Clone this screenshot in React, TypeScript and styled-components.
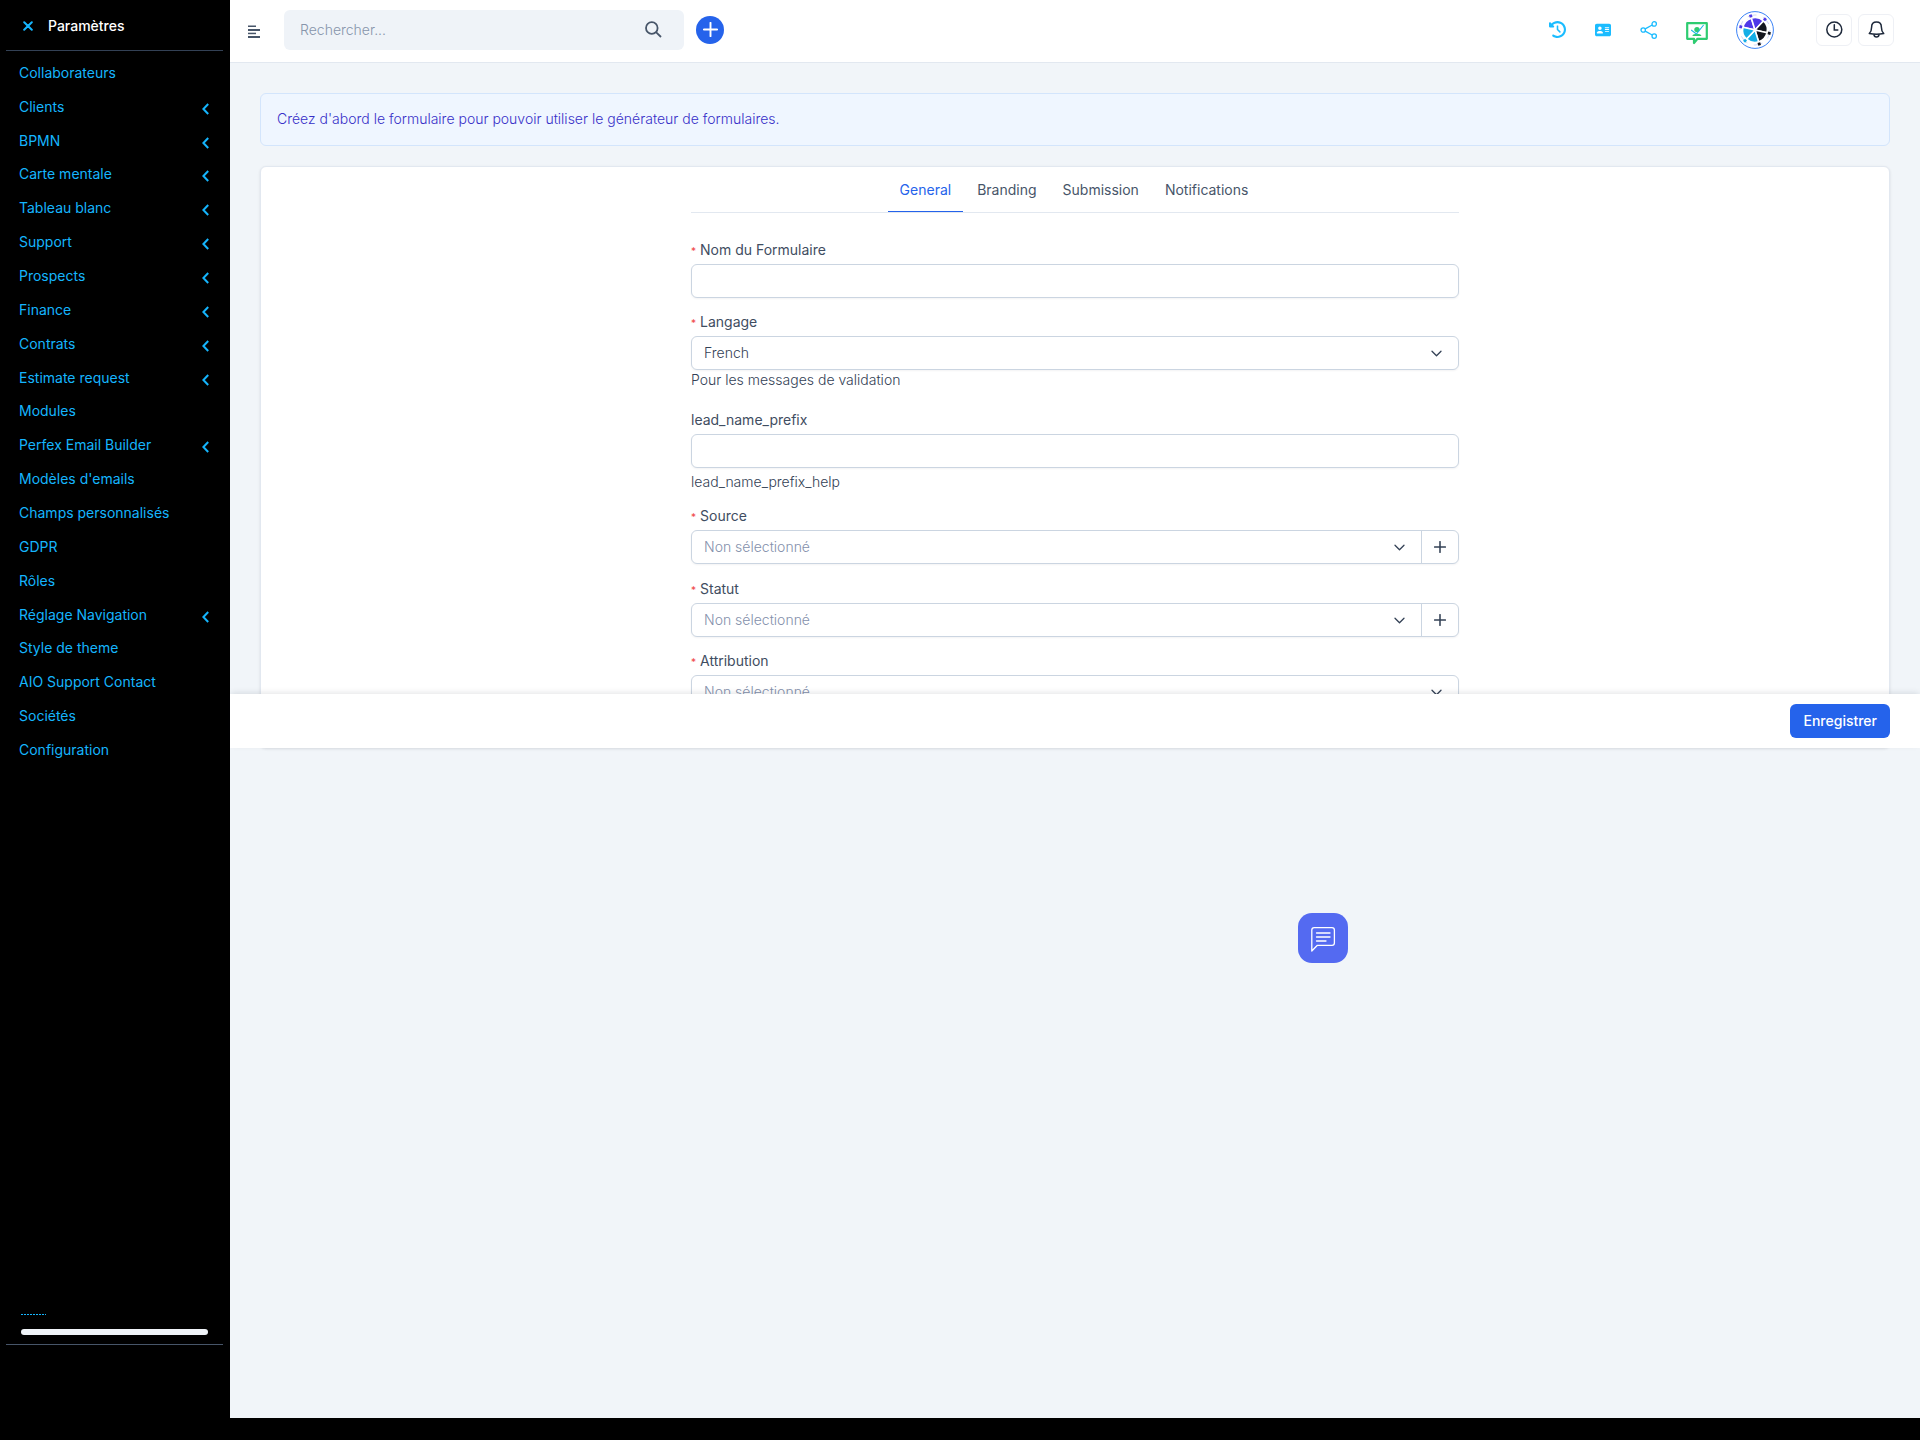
import React from 'react';
import styled, { createGlobalStyle } from 'styled-components';
import { FaClockRotateLeft, FaAddressCard } from 'react-icons/fa6';

const GlobalStyle = createGlobalStyle`
  *, *::before, *::after { box-sizing: border-box; }
  body {
    margin: 0;
    background: #000;
    color: #475569;
    font-family: Inter, "Liberation Sans", sans-serif;
    font-size: 14px;
    line-height: 20px;
  }
  button, input, select { font: inherit; color: inherit; margin: 0; }
  ul { list-style: none; margin: 0; padding: 0; }
`;

const Shell = styled.div`
  display: grid;
  grid-template-columns: 230px minmax(0, 1fr);
  grid-template-rows: minmax(0, 1fr) 22px;
  min-height: 100vh;
  background: #000;
`;

/* ---------- sidebar ---------- */

const Sidebar = styled.aside`
  grid-row: 1 / 3;
  display: flex;
  flex-direction: column;
  padding: 0 7px 0 6px;
  background: #000;
  color: #15b5fd;
`;

const SidebarHead = styled.div`
  display: flex;
  align-items: center;
  gap: 15px;
  height: 51px;
  padding: 2px 0 0 17px;
  border-bottom: 1px solid #334155;
`;

const CloseButton = styled.button`
  display: flex;
  padding: 0;
  border: 0;
  background: none;
  color: inherit;
  cursor: pointer;
`;

const SidebarTitle = styled.span`
  color: #fff;
  font-weight: 500;
`;

const Menu = styled.ul`
  display: grid;
  grid-auto-rows: 1fr;
  height: 711px;
  margin-top: 5px;
`;

const MenuLink = styled.a`
  display: flex;
  align-items: center;
  justify-content: space-between;
  height: 100%;
  padding: 0 14px 0 13px;
  color: inherit;
  text-decoration: none;

  svg { margin-top: 4px; }
`;

const ProjectBox = styled.div`
  margin-top: auto;
  margin-bottom: 95px;
  padding: 0 15px 9px;
  border-bottom: 1px solid #475569;
`;

const Dots = styled.div`
  width: 25px;
  height: 1px;
  margin-bottom: 14px;
  background: repeating-linear-gradient(90deg, #15b5fd 0 2px, transparent 2px 3px);
`;

const Bar = styled.div`
  height: 6px;
  border-radius: 3px;
  background: #eff3f8;
`;

/* ---------- header ---------- */

const Page = styled.div`
  display: flex;
  flex-direction: column;
  background: #f1f5f9;
`;

const Header = styled.header`
  display: flex;
  align-items: center;
  height: 63px;
  padding: 0 26px 3px 18px;
  border-bottom: 1px solid #e2e8f0;
  background: #fff;
`;

const IconButton = styled.button<{ $color?: string }>`
  display: grid;
  place-items: center;
  padding: 0;
  border: 0;
  background: none;
  color: ${(p) => p.$color || '#475569'};
  cursor: pointer;
`;

const ToggleButton = styled(IconButton)`
  width: 12px;
  height: 40px;
  padding-top: 4px;
`;

const SearchBox = styled.form`
  display: flex;
  align-items: center;
  width: 400px;
  height: 40px;
  margin-left: 24px;
  padding: 0 22px 0 16px;
  border-radius: 6px;
  background: #eff3f8;
`;

const SearchInput = styled.input`
  flex: 1;
  min-width: 0;
  padding: 0;
  border: 0;
  outline: 0;
  background: none;
  font-weight: 300;
  &::placeholder { color: #8795ab; opacity: 1; }
`;

const AddButton = styled(IconButton)`
  width: 28px;
  height: 28px;
  margin-left: 12px;
  border-radius: 50%;
  background: #2563eb;
`;

const Tools = styled.div`
  display: flex;
  align-items: center;
  gap: 28px;
  margin-left: auto;
`;

const ToolButton = styled(IconButton)`
  width: 18px;
  height: 38px;
`;

const CheckInButton = styled(IconButton)`
  width: 20px;
  height: 38px;
  padding-top: 8px;
`;

const Avatar = styled(IconButton)`
  width: 38px;
  height: 38px;
  margin-left: 30px;
`;

const Squares = styled.div`
  display: flex;
  gap: 6px;
  margin-left: 42px;
`;

const SquareButton = styled(IconButton)`
  width: 36px;
  height: 32px;
  border: 1px solid #eef0f5;
  border-radius: 6px;
`;

/* ---------- content ---------- */

const Content = styled.main`
  padding-top: 30px;
`;

const Alert = styled.div`
  margin: 0 30px 20px;
  padding: 15px 16px 16px;
  border: 1px solid #d3e5fc;
  border-radius: 6px;
  background: #eff6ff;
  color: #3730c8;
  font-weight: 300;
`;

const Panel = styled.section`
  max-height: 582px;
  margin: 0 30px;
  overflow: hidden;
  border: 1px solid #e2e8f0;
  border-radius: 6px;
  background: #fff;
  box-shadow: 0 1px 3px rgba(15, 23, 42, 0.1);
`;

const PanelInner = styled.div`
  max-width: 768px;
  margin: 0 auto;
`;

const Tabs = styled.div`
  display: flex;
  justify-content: center;
  gap: 2px;
  padding-right: 2px;
  border-bottom: 1px solid #e2e8f0;
`;

const Tab = styled.button<{ $active?: boolean }>`
  padding: 13px 12px 11px;
  border: 0;
  border-bottom: 1px solid ${(p) => (p.$active ? '#2563eb' : 'transparent')};
  background: none;
  color: ${(p) => (p.$active ? '#2563eb' : '#475569')};
  cursor: pointer;
`;

const Fields = styled.form`
  padding: 27px 0 80px;
`;

const Field = styled.div<{ $gap?: number }>`
  margin-bottom: ${(p) => p.$gap || 14}px;
`;

const Label = styled.label`
  display: block;
  margin-bottom: 4px;
  color: #3f4d61;
`;

const Star = styled.span`
  margin-right: 4px;
  color: #ef4444;
  font-size: 10px;
  line-height: 10px;
`;

const Control = styled.div`
  display: flex;
  height: 34px;
  border: 1px solid #cbd5e1;
  border-radius: 6px;
  background: #fff;
  box-shadow: 0 1px 2px rgba(15, 23, 42, 0.05);
`;

const TextInput = styled.input`
  flex: 1;
  min-width: 0;
  padding: 0 12px;
  border: 0;
  outline: 0;
  background: none;
`;

const SelectWrap = styled.div`
  flex: 1;
  display: grid;
  align-items: center;

  & > * { grid-area: 1 / 1; }
  & > svg { justify-self: end; margin-right: 16px; pointer-events: none; }
`;

const Select = styled.select<{ $empty?: boolean }>`
  appearance: none;
  width: 100%;
  height: 32px;
  padding: 0 12px;
  border: 0;
  outline: 0;
  background: none;
  color: ${(p) => (p.$empty ? '#8490ab' : '#334155')};
  font-weight: 300;
`;

const AddOn = styled(IconButton)`
  width: 37px;
  border-left: 1px solid #cbd5e1;
`;

const Help = styled.p<{ $spaced?: boolean }>`
  margin: ${(p) => (p.$spaced ? 4 : 0)}px 0 0;
  color: #334155;
  font-weight: 300;
`;

const BottomBar = styled.div`
  position: relative;
  z-index: 1;
  display: flex;
  align-items: center;
  justify-content: flex-end;
  height: 54px;
  margin-top: -54px;
  padding: 0 30px;
  background: #fff;
  box-shadow: 0 -2px 6px -1px rgba(15, 23, 42, 0.12);
`;

const SaveButton = styled.button`
  height: 34px;
  padding: 0 13px;
  border: 0;
  border-radius: 6px;
  background: #2563eb;
  color: #fff;
  font-weight: 500;
  cursor: pointer;
`;

const ChatButton = styled.button`
  position: fixed;
  right: 572px;
  top: 913px;
  display: grid;
  place-items: center;
  width: 50px;
  height: 50px;
  padding: 2px 0 0;
  border: 0;
  border-radius: 14px;
  background: #546af1;
  cursor: pointer;
`;

/* ---------- drawings ---------- */

const Chevron = () => (
  <svg width="7" height="12" viewBox="0 0 7 12" fill="none" stroke="currentColor" strokeWidth="2" aria-hidden="true">
    <path d="M6.2 1 L1.4 6 L6.2 11" />
  </svg>
);

const Cross = () => (
  <svg width="10" height="10" viewBox="0 0 10 10" fill="none" stroke="currentColor" strokeWidth="2" strokeLinecap="round" aria-hidden="true">
    <path d="M1.2 1.2 L8.8 8.8 M8.8 1.2 L1.2 8.8" />
  </svg>
);

const Down = () => (
  <svg width="11" height="7" viewBox="0 0 11 7" fill="none" stroke="#334155" strokeWidth="1.3" strokeLinecap="round" strokeLinejoin="round" aria-hidden="true">
    <path d="M1 1.2 L5.5 5.7 L10 1.2" />
  </svg>
);

const Lines = () => (
  <svg width="12" height="14" viewBox="0 0 12 14" fill="#475569" aria-hidden="true">
    <rect x="0" y="0.5" width="8" height="1.5" />
    <rect x="0" y="4" width="12" height="2" />
    <rect x="0" y="7.7" width="8" height="1.5" />
    <rect x="0" y="11" width="12" height="2" />
  </svg>
);

const Magnifier = () => (
  <svg width="17" height="17" viewBox="0 0 17 17" fill="none" stroke="#475569" strokeWidth="1.8" aria-hidden="true">
    <circle cx="6.8" cy="7" r="5.8" />
    <path d="M11 11.2 L16 16" />
  </svg>
);

const Plus = ({ size, color }: { size: number; color: string }) => (
  <svg width={size} height={size} viewBox="0 0 14 14" fill="none" stroke={color} strokeWidth="1.8" strokeLinecap="round" aria-hidden="true">
    <path d="M7 0.8 V13.2 M0.8 7 H13.2" />
  </svg>
);

const Share = () => (
  <svg width="18" height="18" viewBox="0 0 18 18" fill="none" stroke="#1bbcff" strokeWidth="1.3" aria-hidden="true">
    <circle cx="3.2" cy="9" r="2.2" />
    <circle cx="14.2" cy="2.9" r="2.2" />
    <circle cx="14.2" cy="15.1" r="2.2" />
    <path d="M5.2 7.9 L12.2 4 M5.2 10.1 L12.2 14" />
  </svg>
);

const CheckIn = () => (
  <svg width="22" height="23" viewBox="0 0 22 23" fill="none" aria-hidden="true">
    <path d="M1.2 1.2 H20.8 V16.8 H11.5 L8 21 V16.8 H1.2 Z" stroke="#2ecc71" strokeWidth="2.2" strokeLinejoin="round" />
    <circle cx="11" cy="7.6" r="2.7" fill="#2ecc71" />
    <path d="M6.4 14 C6.4 10.9 15.4 10.9 15.4 14 Z" fill="#2ecc71" />
    <path d="M5.2 8 L10.4 12 L17.6 3" stroke="#1fb6e8" strokeWidth="1.1" />
  </svg>
);

const wheel = ['#4f39e8', '#4f39e8', '#14171f', '#14171f', '#14aee6', '#14aee6'];
const dots = ['#4f39e8', '#4f39e8', '#4f39e8', '#14171f', '#14171f', '#14aee6'];
const polar = (angle: number, r: number) => {
  const a = (angle * Math.PI) / 180;
  return [19 + r * Math.cos(a), 19 + r * Math.sin(a)];
};

const Wheel = () => (
  <svg width="38" height="38" viewBox="0 0 38 38" aria-hidden="true">
    <circle cx="19" cy="19" r="18.4" fill="#fff" stroke="#3b82f6" strokeWidth="1" />
    <circle cx="19" cy="19" r="15" fill="none" stroke="#b9c6f4" strokeWidth="0.7" strokeDasharray="9 6.7" />
    {wheel.map((color, i) => {
      const start = -167 + i * 60;
      const [x1, y1] = polar(start, 12.4);
      const [x2, y2] = polar(start + 60, 12.4);
      return <path key={i} d={`M19 19 L${x1} ${y1} A12.4 12.4 0 0 1 ${x2} ${y2} Z`} fill={color} stroke="#fff" strokeWidth="1.6" />;
    })}
    {dots.map((color, i) => {
      const angle = -167 + i * 60;
      const [x, y] = polar(angle, 14.6);
      return <rect key={i} x={x - 1.4} y={y - 1.4} width="2.8" height="2.8" fill={color} transform={`rotate(${angle} ${x} ${y})`} />;
    })}
  </svg>
);

const Clock = () => (
  <svg width="17" height="17" viewBox="0 0 17 17" fill="none" stroke="#1e293b" strokeWidth="1.5" strokeLinecap="round" aria-hidden="true">
    <circle cx="8.3" cy="8.5" r="7.5" />
    <path d="M8.3 3.8 V8.9 H11.8" />
  </svg>
);

const Bell = () => (
  <svg width="17" height="17" viewBox="0 0 17 17" fill="none" stroke="#1e293b" strokeWidth="1.5" strokeLinejoin="round" aria-hidden="true">
    <path d="M1.3 12.6 C3.2 10.6 3.6 8.7 3.6 6.2 C3.6 3 5.6 1 8.5 1 C11.4 1 13.4 3 13.4 6.2 C13.4 8.7 13.8 10.6 15.7 12.6 C11.4 13.5 5.6 13.5 1.3 12.6 Z" />
    <path d="M5.9 13.4 C6.1 15.2 7.1 16 8.5 16 C9.9 16 10.9 15.2 11.1 13.4" />
  </svg>
);

const Chat = () => (
  <svg width="26" height="26" viewBox="0 0 26 26" fill="none" stroke="#fff" strokeWidth="1.3" strokeLinecap="round" strokeLinejoin="round" aria-hidden="true">
    <path d="M1.8 25 V4 Q1.8 1.6 4.2 1.6 H22 Q24.4 1.6 24.4 4 V17 Q24.4 19.3 22 19.3 H7.4 Z" />
    <path d="M6.5 7 H20 M6.5 11 H20 M6.5 15 H16" />
  </svg>
);

/* ---------- data ---------- */

const menu: [string, boolean][] = [
  ['Collaborateurs', false],
  ['Clients', true],
  ['BPMN', true],
  ['Carte mentale', true],
  ['Tableau blanc', true],
  ['Support', true],
  ['Prospects', true],
  ['Finance', true],
  ['Contrats', true],
  ['Estimate request', true],
  ['Modules', false],
  ['Perfex Email Builder', true],
  ["Modèles d'emails", false],
  ['Champs personnalisés', false],
  ['GDPR', false],
  ['Rôles', false],
  ['Réglage Navigation', true],
  ['Style de theme', false],
  ['AIO Support Contact', false],
  ['Sociétés', false],
  ['Configuration', false],
];

const tabs = ['General', 'Branding', 'Submission', 'Notifications'];

const FieldLabel = ({ id, text, required }: { id: string; text: string; required?: boolean }) => (
  <Label htmlFor={id}>
    {required && <Star>*</Star>}
    {text}
  </Label>
);

const SelectControl = ({ id, value, addLabel }: { id: string; value?: string; addLabel?: string }) => (
  <Control>
    <SelectWrap>
      <Select id={id} $empty={!value}>
        <option>{value || 'Non sélectionné'}</option>
      </Select>
      <Down />
    </SelectWrap>
    {addLabel && (
      <AddOn type="button" aria-label={addLabel}>
        <Plus size={12} color="#334155" />
      </AddOn>
    )}
  </Control>
);

export default function App() {
  const [active, setActive] = React.useState('General');
  return (
    <>
      <GlobalStyle />
      <Shell>
        <Sidebar>
          <SidebarHead>
            <CloseButton type="button" aria-label="Fermer">
              <Cross />
            </CloseButton>
            <SidebarTitle>Paramètres</SidebarTitle>
          </SidebarHead>
          <nav>
            <Menu>
              {menu.map(([name, nested]) => (
                <li key={name}>
                  <MenuLink href="#">
                    {name}
                    {nested && <Chevron />}
                  </MenuLink>
                </li>
              ))}
            </Menu>
          </nav>
          <ProjectBox>
            <Dots />
            <Bar />
          </ProjectBox>
        </Sidebar>

        <Page>
          <Header>
            <ToggleButton type="button" aria-label="Menu">
              <Lines />
            </ToggleButton>
            <SearchBox role="search">
              <SearchInput type="search" placeholder="Rechercher..." aria-label="Rechercher" />
              <IconButton type="button" aria-label="Lancer la recherche">
                <Magnifier />
              </IconButton>
            </SearchBox>
            <AddButton type="button" aria-label="Créer">
              <Plus size={15} color="#fff" />
            </AddButton>
            <Tools>
              <ToolButton type="button" $color="#1bbcff" aria-label="Historique">
                <FaClockRotateLeft size={17} />
              </ToolButton>
              <ToolButton type="button" $color="#1bbcff" aria-label="Carte de contact">
                <FaAddressCard size={16} />
              </ToolButton>
              <ToolButton type="button" aria-label="Partager">
                <Share />
              </ToolButton>
              <CheckInButton type="button" aria-label="Présence">
                <CheckIn />
              </CheckInButton>
            </Tools>
            <Avatar type="button" aria-label="Profil">
              <Wheel />
            </Avatar>
            <Squares>
              <SquareButton type="button" aria-label="Minuteurs">
                <Clock />
              </SquareButton>
              <SquareButton type="button" aria-label="Alertes">
                <Bell />
              </SquareButton>
            </Squares>
          </Header>

          <Content>
            <Alert role="status">Créez d'abord le formulaire pour pouvoir utiliser le générateur de formulaires.</Alert>
            <Panel>
              <PanelInner>
                <Tabs role="tablist">
                  {tabs.map((name) => (
                    <Tab key={name} type="button" role="tab" aria-selected={name === active} $active={name === active} onClick={() => setActive(name)}>
                      {name}
                    </Tab>
                  ))}
                </Tabs>
                <Fields id="lead-form">
                  <Field>
                    <FieldLabel id="name" text="Nom du Formulaire" required />
                    <Control>
                      <TextInput id="name" />
                    </Control>
                  </Field>
                  <Field $gap={20}>
                    <FieldLabel id="language" text="Langage" required />
                    <SelectControl id="language" value="French" />
                    <Help>Pour les messages de validation</Help>
                  </Field>
                  <Field>
                    <FieldLabel id="prefix" text="lead_name_prefix" />
                    <Control>
                      <TextInput id="prefix" />
                    </Control>
                    <Help $spaced>lead_name_prefix_help</Help>
                  </Field>
                  <Field $gap={15}>
                    <FieldLabel id="source" text="Source" required />
                    <SelectControl id="source" addLabel="Ajouter une source" />
                  </Field>
                  <Field>
                    <FieldLabel id="status" text="Statut" required />
                    <SelectControl id="status" addLabel="Ajouter un statut" />
                  </Field>
                  <Field>
                    <FieldLabel id="assigned" text="Attribution" required />
                    <SelectControl id="assigned" />
                  </Field>
                </Fields>
              </PanelInner>
            </Panel>
            <BottomBar>
              <SaveButton type="submit" form="lead-form">
                Enregistrer
              </SaveButton>
            </BottomBar>
          </Content>
        </Page>
      </Shell>
      <ChatButton type="button" aria-label="Discussion">
        <Chat />
      </ChatButton>
    </>
  );
}
